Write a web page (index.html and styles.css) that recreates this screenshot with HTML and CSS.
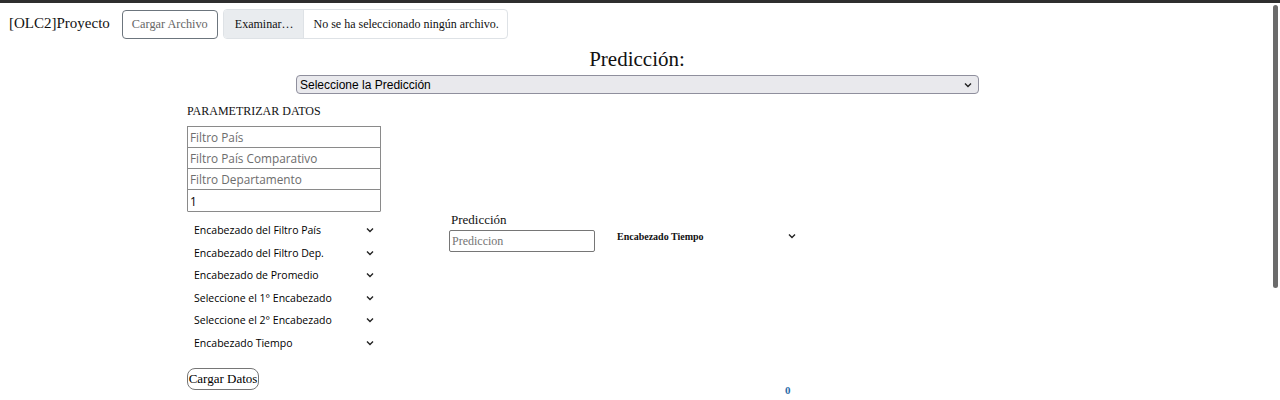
FILE: index.html
```html
<!DOCTYPE html>
<html lang="es">
<head>
<meta charset="utf-8">
<title>OLC2 Proyecto</title>
<link rel="stylesheet" href="styles.css">
</head>
<body>
<div class="topline"></div>
<header class="head">
  <span class="brand">[OLC2]Proyecto</span>
  <button class="btn-load">Cargar Archivo</button>
  <div class="file">
    <span class="file-btn">Examinar…</span>
    <span class="file-name">No se ha seleccionado ningún archivo.</span>
  </div>
</header>
<h2 class="title">Predicción:</h2>
<div class="main-select-row">
  <div class="sel main-sel"><span>Seleccione la Predicción</span><svg class="chev" viewBox="0 0 8 6"><path d="M1 1.5 4 4.5 7 1.5" fill="none" stroke="#222" stroke-width="1.4"/></svg></div>
</div>
<section class="params">
  <div class="col-left">
    <div class="ptitle">PARAMETRIZAR DATOS</div>
    <div class="inputs">
      <div class="inp ph">Filtro País</div>
      <div class="inp ph">Filtro País Comparativo</div>
      <div class="inp ph">Filtro Departamento</div>
      <div class="inp val">1</div>
    </div>
    <div class="plain-sels">
      <div class="psel"><span>Encabezado del Filtro País</span><svg class="chev" viewBox="0 0 8 6"><path d="M1 1.5 4 4.5 7 1.5" fill="none" stroke="#222" stroke-width="1.4"/></svg></div>
      <div class="psel"><span>Encabezado del Filtro Dep.</span><svg class="chev" viewBox="0 0 8 6"><path d="M1 1.5 4 4.5 7 1.5" fill="none" stroke="#222" stroke-width="1.4"/></svg></div>
      <div class="psel"><span>Encabezado de Promedio</span><svg class="chev" viewBox="0 0 8 6"><path d="M1 1.5 4 4.5 7 1.5" fill="none" stroke="#222" stroke-width="1.4"/></svg></div>
      <div class="psel"><span>Seleccione el 1° Encabezado</span><svg class="chev" viewBox="0 0 8 6"><path d="M1 1.5 4 4.5 7 1.5" fill="none" stroke="#222" stroke-width="1.4"/></svg></div>
      <div class="psel"><span>Seleccione el 2° Encabezado</span><svg class="chev" viewBox="0 0 8 6"><path d="M1 1.5 4 4.5 7 1.5" fill="none" stroke="#222" stroke-width="1.4"/></svg></div>
      <div class="psel"><span>Encabezado Tiempo</span><svg class="chev" viewBox="0 0 8 6"><path d="M1 1.5 4 4.5 7 1.5" fill="none" stroke="#222" stroke-width="1.4"/></svg></div>
    </div>
    <button class="btn-data">Cargar Datos</button>
  </div>
  <div class="col-mid">
    <label class="plabel">Predicción</label>
    <div class="pinput">Prediccion</div>
  </div>
  <div class="col-right">
    <div class="tsel"><span>Encabezado Tiempo</span><svg class="chev" viewBox="0 0 8 6"><path d="M1 1.5 4 4.5 7 1.5" fill="none" stroke="#222" stroke-width="1.4"/></svg></div>
    <div class="zero">0</div>
  </div>
</section>
<div class="scrollthumb"></div>
</body>
</html>
```
FILE: styles.css
```css
html, body { margin: 0; padding: 0; background: #fff; }
body { font-family: "Liberation Serif", serif; color: #111; overflow: hidden; height: 400px; position: relative; }
.topline { height: 3px; background: #2e2e2e; }
.head { display: flex; align-items: center; padding: 7px 0 0 9px; height: 28px; }
.brand { font-size: 15px; margin-right: 12px; margin-top: -1px; }
.btn-load { font-family: "Liberation Serif", serif; font-size: 12.3px; color: #666; background: #fff; border: 1px solid #6c757d; border-radius: 4px; height: 29px; width: 96px; padding: 0; margin-right: 5px; }
.file { display: flex; height: 28px; border: 1px solid #dee2e6; border-radius: 4px; font-size: 12px; overflow: hidden; }
.file-btn { background: #e9ecef; display: flex; align-items: center; padding: 0 10px 0 11px; border-right: 1px solid #dee2e6; }
.file-name { display: flex; align-items: center; padding: 0 8px 0 9px; }
.title { margin: 8px 0 0; padding-right: 6px; text-align: center; font-weight: normal; font-size: 21px; line-height: 26px; }
.main-select-row { padding-left: 296px; margin-top: 3px; }
.sel { box-sizing: border-box; width: 683px; height: 19px; border: 1px solid #8f8f9d; border-radius: 4px; background: #e9e9ed; display: flex; align-items: center; justify-content: space-between; padding: 0 6px 0 3px; font-family: "Liberation Sans", sans-serif; font-size: 12px; font-weight: normal; color: #000; }
.chev { width: 8px; height: 6px; }
.params { display: flex; padding-left: 187px; }
.col-left { width: 194px; }
.ptitle { font-size: 12px; margin-top: 10px; line-height: 15px; }
.inputs { margin-top: 7px; display: flex; flex-direction: column; }
.inp { box-sizing: border-box; height: 22px; border: 1px solid #8a8a8a; margin-top: -1px; display: flex; align-items: center; padding-left: 2px; font-family: "Open Sans", sans-serif; font-size: 11.8px; }
.inp:first-child { margin-top: 0; }
.inp.ph { color: #6d6d6d; }
.inp.val { color: #000; height: 23px; border-radius: 1px; }
.plain-sels { margin-top: 7px; display: flex; flex-direction: column; }
.psel { height: 22.5px; display: flex; align-items: center; justify-content: space-between; padding: 0 7px 0 7px; font-family: "Open Sans", sans-serif; font-size: 10.5px; color: #000; }
.btn-data { margin-top: 14px; font-family: "Liberation Serif", serif; font-size: 13px; color: #000; background: #fff; border: 1px solid #767676; border-radius: 8px; height: 22px; width: 72px; padding: 0; }
.col-mid { margin-left: 68px; margin-top: 118px; display: flex; flex-direction: column; }
.plabel { font-size: 13px; margin-left: 2px; line-height: 15px; }
.pinput { box-sizing: border-box; width: 146px; height: 22px; border: 1px solid #767676; border-radius: 2px; margin-top: 3px; font-size: 12px; color: #757575; display: flex; align-items: center; padding-left: 2px; }
.col-right { margin-left: 17px; margin-top: 135px; display: flex; flex-direction: column; }
.tsel { width: 188px; height: 14px; display: flex; align-items: center; justify-content: space-between; padding: 0 4px 0 5px; box-sizing: border-box; font-size: 10px; font-weight: bold; }
.zero { margin-top: 141px; margin-left: 173px; font-size: 11px; font-weight: bold; color: #2b6ca8; }
.scrollthumb { position: fixed; right: 2px; top: 5px; width: 5px; height: 283px; background: #6b6b6b; border-radius: 3px; }
```
